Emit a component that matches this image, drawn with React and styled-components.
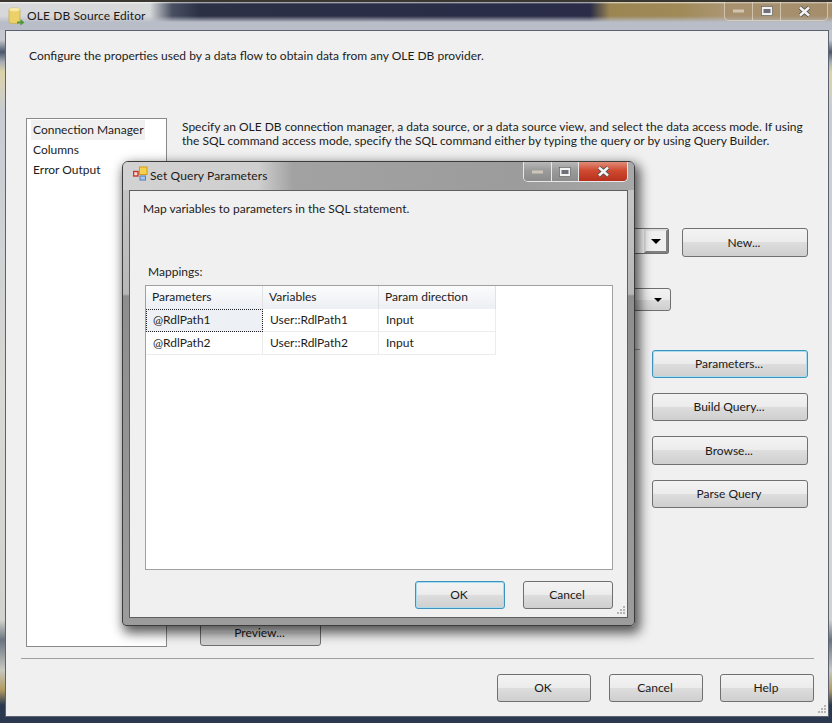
import React from "react";
import styled, { createGlobalStyle, css } from "styled-components";

const GlobalStyle = createGlobalStyle`
  html, body {
    margin: 0;
    padding: 0;
    background: #2b3950;
  }
  body {
    font-family: "Lato", "Open Sans", sans-serif;
    font-size: 12px;
    color: #1c1c1c;
  }
`;

const rows = [
  { parameter: "@RdlPath1", variable: "User::RdlPath1", direction: "Input" },
  { parameter: "@RdlPath2", variable: "User::RdlPath2", direction: "Input" }
];

const App = () => {
  return (
    <Page>
      <GlobalStyle />
      <TitleBar>
        <DbIcon />
        <TitleText>OLE DB Source Editor</TitleText>
        <Controls>
          <ControlButton $width={28}><MinGlyph /></ControlButton>
          <ControlButton $width={28}><MaxGlyph /></ControlButton>
          <ControlButton $width={46} $last><CloseGlyph /></ControlButton>
        </Controls>
      </TitleBar>

      <Client>
        <Intro>Configure the properties used by a data flow to obtain data from any OLE DB provider.</Intro>
        <Main>
          <Sidebar>
            <SideItem $selected>Connection Manager</SideItem>
            <SideItem>Columns</SideItem>
            <SideItem>Error Output</SideItem>
          </Sidebar>
          <Content>
            <Description>
              Specify an OLE DB connection manager, a data source, or a data source view, and select the data access mode. If using
              <br />
              the SQL command access mode, specify the SQL command either by typing the query or by using Query Builder.
            </Description>
            <ManagerRow>
              <Combo $height={26} $square>
                <ComboArrow $square />
              </Combo>
              <Button $width={126} $height={29}>New...</Button>
            </ManagerRow>
            <ModeCombo $height={23}>
              <ComboArrow />
            </ModeCombo>
            <QueryRow>
              <QueryBox />
              <QueryButtons>
                <Button $focused>Parameters...</Button>
                <Button>Build Query...</Button>
                <Button $height={29}>Browse...</Button>
                <Button>Parse Query</Button>
              </QueryButtons>
            </QueryRow>
            <PreviewButton>Preview...</PreviewButton>
          </Content>
        </Main>
        <Separator />
        <Footer>
          <Button $width={94}>OK</Button>
          <Button $width={94}>Cancel</Button>
          <Button $width={94}>Help</Button>
          <Grip />
        </Footer>
      </Client>

      <Dialog>
        <DialogTitleBar>
          <ParamsIcon />
          <DialogTitle>Set Query Parameters</DialogTitle>
          <DialogControls>
            <DialogControl $width={28}><MinGlyph /></DialogControl>
            <DialogControl $width={27}><MaxGlyph /></DialogControl>
            <DialogControl $width={48} $close><CloseGlyph /></DialogControl>
          </DialogControls>
        </DialogTitleBar>
        <DialogClient>
          <DialogIntro>Map variables to parameters in the SQL statement.</DialogIntro>
          <MappingsLabel>Mappings:</MappingsLabel>
          <GridBox>
            <GridRow>
              <HeaderCell>Parameters</HeaderCell>
              <HeaderCell>Variables</HeaderCell>
              <HeaderCell>Param direction</HeaderCell>
            </GridRow>
            {rows.map((row, i) => (
              <GridRow key={row.parameter}>
                <Cell $focused={i === 0}>{row.parameter}</Cell>
                <Cell>{row.variable}</Cell>
                <Cell>{row.direction}</Cell>
              </GridRow>
            ))}
          </GridBox>
          <DialogFooter>
            <Button $width={90} $focused>OK</Button>
            <Button $width={90}>Cancel</Button>
            <Grip />
          </DialogFooter>
        </DialogClient>
      </Dialog>
    </Page>
  );
};

export default App;

// Drawn bits
const DbIcon = () => (
  <IconSvg width="18" height="20" viewBox="0 0 18 20">
    <path d="M2 3.5C2 1.5 13 1.5 13 3.5V16C13 18 2 18 2 16Z" fill="#ecd068" stroke="#c9a93f" strokeWidth="0.7" />
    <ellipse cx="7.5" cy="3.5" rx="5.5" ry="1.8" fill="#f7eaa6" />
    <path d="M10 15.5h3.5V13l4 3.5-4 3V17.5H10Z" fill="#4f9a3c" />
  </IconSvg>
);

const ParamsIcon = () => (
  <IconSvg width="15" height="15" viewBox="0 0 15 15">
    <rect x="0.5" y="5.5" width="4.5" height="4.5" fill="#f6d9c8" stroke="#c8352a" strokeWidth="1.4" />
    <rect x="6.5" y="1" width="7.5" height="7.5" fill="#f4d24e" stroke="#d49a1a" />
    <rect x="7" y="10" width="5.5" height="4" fill="#a9c6ea" stroke="#4f7fbd" />
  </IconSvg>
);

const MinGlyph = () => (
  <svg width="11" height="4" viewBox="0 0 11 4">
    <rect x="0" y="0.5" width="11" height="3" fill="#e2d6c6" opacity="0.75" />
  </svg>
);

const MaxGlyph = () => (
  <svg width="12" height="10" viewBox="0 0 12 10">
    <rect x="0.5" y="0.5" width="11" height="9" fill="#f2f2f2" stroke="#555" strokeWidth="0.6" />
    <rect x="2.5" y="3" width="7" height="4" fill="#6d7078" />
  </svg>
);

const CloseGlyph = () => (
  <svg width="13" height="11" viewBox="0 0 13 11">
    <path d="M2 1.5 L11 9.5 M11 1.5 L2 9.5" stroke="#4a4a4a" strokeWidth="4.2" />
    <path d="M2 1.5 L11 9.5 M11 1.5 L2 9.5" stroke="#f4f4f4" strokeWidth="2.6" />
  </svg>
);

const Grip = () => (
  <GripSvg width="11" height="11" viewBox="0 0 11 11">
    <path d="M8 1h2v2H8zM5 4h2v2H5zM8 4h2v2H8zM2 7h2v2H2zM5 7h2v2H5zM8 7h2v2H8z" fill="#b5b5b5" />
  </GripSvg>
);

const Page = styled.div`
  position: relative;
  width: 832px;
  height: 723px;
  box-sizing: border-box;
  padding: 0 3px 6px 5px;
  display: flex;
  flex-direction: column;
  overflow: hidden;
  background: linear-gradient(
    180deg,
    #c5c8cc 0,
    #c5c8cc 40px,
    #4a566c 52px,
    #a8acb2 62px,
    #ddd3a8 72px,
    #c8ccd2 110px,
    #d8d8d4 400px,
    #d2d2ce 620px,
    #6a7480 640px,
    #c8c8c0 670px,
    #b09a60 690px,
    #2b3950 705px
  );
`;

const TitleBar = styled.div`
  height: 30px;
  margin: 0 -3px 0 -5px;
  padding-left: 5px;
  box-sizing: border-box;
  display: flex;
  align-items: flex-start;
  flex-shrink: 0;
  border-top: 2px solid #3a3630;
  background:
    linear-gradient(180deg, rgba(255, 255, 255, 0.75) 0, rgba(255, 255, 255, 0) 2px),
    linear-gradient(180deg, rgba(186, 190, 199, 0) 50%, #b9bdc7 72%, #b9bdc7 100%),
    linear-gradient(
      90deg,
      #d6d8da 0,
      #d6d8da 150px,
      #4a5062 172px,
      #2b3045 200px,
      #2a2c48 590px,
      #9b8652 610px,
      #a08a58 680px,
      #ad9777 730px,
      #a89272 832px
    );
`;

const IconSvg = styled.svg`
  flex-shrink: 0;
  margin: 4px 2px 0 2px;
`;

const TitleText = styled.div`
  margin-top: 7px;
  line-height: 14px;
  color: #1a1a1a;
  letter-spacing: 0.1px;
`;

const Controls = styled.div`
  margin-left: auto;
  margin-right: 4px;
  height: 18px;
  display: flex;
  border: 1px solid rgba(235, 230, 215, 0.6);
  border-top: 0;
  border-radius: 0 0 5px 5px;
  background: rgba(150, 125, 80, 0.2);
`;

const ControlButton = styled.div`
  width: ${(p) => p.$width}px;
  display: flex;
  align-items: center;
  justify-content: center;
  box-sizing: border-box;
  ${(p) => !p.$last && "border-right: 1px solid rgba(235, 230, 215, 0.6);"}
`;

const Client = styled.div`
  flex: 1;
  min-height: 0;
  display: flex;
  flex-direction: column;
  box-sizing: border-box;
  background: #f0f0f0;
  border: 1px solid #5c6270;
  position: relative;
`;

const Intro = styled.div`
  padding: 17px 0 0 23px;
  height: 70px;
  line-height: 16px;
`;

const Main = styled.div`
  display: flex;
  gap: 15px;
  padding-left: 20px;
`;

const Sidebar = styled.div`
  width: 141px;
  height: 529px;
  box-sizing: border-box;
  flex-shrink: 0;
  background: #fff;
  border: 1px solid #8a8a8a;
  padding: 1px 4px;
`;

const SideItem = styled.div`
  width: fit-content;
  height: 20px;
  line-height: 20px;
  padding: 0 1px 0 2px;
  ${(p) => p.$selected && "background: #f0f0f0;"}
`;

const Content = styled.div`
  flex: 1;
  min-width: 0;
  display: flex;
  flex-direction: column;
  padding-top: 2px;
  margin-right: 20px;
`;

const Description = styled.div`
  height: 29px;
  line-height: 14px;
  white-space: nowrap;
`;

const ManagerRow = styled.div`
  margin-top: 79px;
  display: flex;
  align-items: flex-start;
  gap: 13px;
`;

const Combo = styled.div`
  flex: 1;
  height: ${(p) => p.$height}px;
  box-sizing: border-box;
  background: #fff;
  border: 1px solid #707070;
  border-radius: 2px;
  display: flex;
  justify-content: flex-end;
`;

const ModeCombo = styled(Combo)`
  flex: none;
  margin-top: 31px;
  width: 489px;
  border-radius: 3px;
  background: linear-gradient(180deg, #f2f2f2 0, #ebebeb 50%, #dcdcdc 50%, #cfcfcf 100%);
`;

const ComboArrow = styled.div`
  width: 24px;
  box-sizing: border-box;
  display: flex;
  align-items: center;
  justify-content: center;
  ${(p) =>
    p.$square &&
    css`
      background: #f0f0f0;
      border: 2px solid #808080;
      border-top-color: #e0e0e0;
      border-left-color: #e0e0e0;
    `}
  &::after {
    content: "";
    border-left: ${(p) => (p.$square ? 5 : 4)}px solid transparent;
    border-right: ${(p) => (p.$square ? 5 : 4)}px solid transparent;
    border-top: ${(p) => (p.$square ? 5 : 4)}px solid #000;
  }
`;

const QueryRow = styled.div`
  margin-top: 38px;
  display: flex;
  align-items: flex-start;
  gap: 12px;
`;

const QueryBox = styled.div`
  flex: 1;
  height: 259px;
  border-top: 1px solid #a0a0a0;
`;

const QueryButtons = styled.div`
  width: 156px;
  margin-top: 1px;
  display: flex;
  flex-direction: column;
  gap: 15px;
`;

const Button = styled.div`
  width: ${(p) => (p.$width ? `${p.$width}px` : "100%")};
  height: ${(p) => p.$height || 28}px;
  flex-shrink: 0;
  box-sizing: border-box;
  padding: 0 2px 1px 0;
  display: flex;
  align-items: center;
  justify-content: center;
  border-radius: 3px;
  border: 1px solid #707070;
  color: #1a1a1a;
  background: linear-gradient(180deg, #f3f3f3 0, #ececec 48%, #dddddd 50%, #cfcfcf 100%);
  ${(p) =>
    p.$focused &&
    css`
      border-color: #3c94bd;
      box-shadow: inset 0 0 0 1px #a8dcf0;
    `}
`;

const PreviewButton = styled(Button)`
  width: 121px;
  height: 27px;
  margin: 10px 0 0 18px;
`;

const Separator = styled.div`
  height: 1px;
  margin: 11px 14px 0 15px;
  background: #a0a0a0;
`;

const Footer = styled.div`
  margin-top: 15px;
  padding-right: 14px;
  display: flex;
  justify-content: flex-end;
  gap: 17px;
  & > :first-child {
    margin-right: 1px;
  }
`;

const GripSvg = styled.svg`
  position: absolute;
  right: 1px;
  bottom: 1px;
`;

const Dialog = styled.div`
  position: absolute;
  left: 122px;
  top: 161px;
  width: 513px;
  height: 465px;
  box-sizing: border-box;
  padding: 0 6px 7px 6px;
  display: flex;
  flex-direction: column;
  border: 1px solid #3c3c3c;
  border-radius: 6px 6px 4px 4px;
  box-shadow: 3px 5px 12px 2px rgba(0, 0, 0, 0.65);
  background: linear-gradient(180deg, #c8c8c8 0, #b8b8b8 132px, #8e8e8e 134px, #9c9c9c 100%);
`;

const DialogTitleBar = styled.div`
  height: 28px;
  margin: 0 -6px;
  padding-left: 8px;
  flex-shrink: 0;
  display: flex;
  align-items: flex-start;
  border-radius: 5px 5px 0 0;
  background: linear-gradient(90deg, #d2d2d2 0, #cfcfcf 135px, #a2a2a2 170px, #9c9c9c 400px, #a8a8a8 100%);
`;

const DialogTitle = styled.div`
  margin-top: 7px;
  line-height: 14px;
  color: #1a1a1a;
  letter-spacing: 0.1px;
`;

const DialogControls = styled.div`
  margin-left: auto;
  margin-right: 6px;
  height: 19px;
  display: flex;
  border: 1px solid #e8e8e8;
  border-top: 0;
  border-radius: 0 0 5px 5px;
  overflow: hidden;
`;

const DialogControl = styled.div`
  width: ${(p) => p.$width}px;
  display: flex;
  align-items: center;
  justify-content: center;
  box-sizing: border-box;
  ${(p) =>
    p.$close
      ? "background: linear-gradient(180deg, #e08c78 0, #cf4a30 45%, #b8301e 100%);"
      : css`
          border-right: 1px solid #e8e8e8;
          background: linear-gradient(180deg, #b8b8b8 0, #9a9a9a 45%, #8c8c8c 100%);
        `}
`;

const DialogClient = styled.div`
  flex: 1;
  min-height: 0;
  position: relative;
  box-sizing: border-box;
  display: flex;
  flex-direction: column;
  background: #f0f0f0;
  border: 1px solid #5f5f5f;
  padding: 0 14px 0 15px;
`;

const DialogIntro = styled.div`
  margin-top: 10px;
  line-height: 16px;
  margin-left: -2px;
`;

const MappingsLabel = styled.div`
  margin-top: 47px;
  line-height: 16px;
  margin-left: 3px;
`;

const GridBox = styled.div`
  margin-top: 5px;
  height: 285px;
  box-sizing: border-box;
  background: #fff;
  border: 1px solid #a0a0a0;
`;

const GridRow = styled.div`
  display: grid;
  grid-template-columns: 117px 116px 117px;
  width: 350px;
  height: 23px;
`;

const HeaderCell = styled.div`
  box-sizing: border-box;
  padding-left: 6px;
  line-height: 21px;
  border-right: 1px solid #e2e2e2;
  background: linear-gradient(180deg, #fbfcfd 0, #f2f4f7 60%, #eceff3 100%);
`;

const Cell = styled.div`
  box-sizing: border-box;
  padding-left: 7px;
  line-height: 21px;
  border-right: 1px solid #ececec;
  border-bottom: 1px solid #ececec;
  ${(p) =>
    p.$focused &&
    css`
      background: #edf1f5;
      outline: 1px dotted #222;
      outline-offset: -1px;
    `}
`;

const DialogFooter = styled.div`
  margin-top: 11px;
  display: flex;
  justify-content: flex-end;
  gap: 18px;
`;
